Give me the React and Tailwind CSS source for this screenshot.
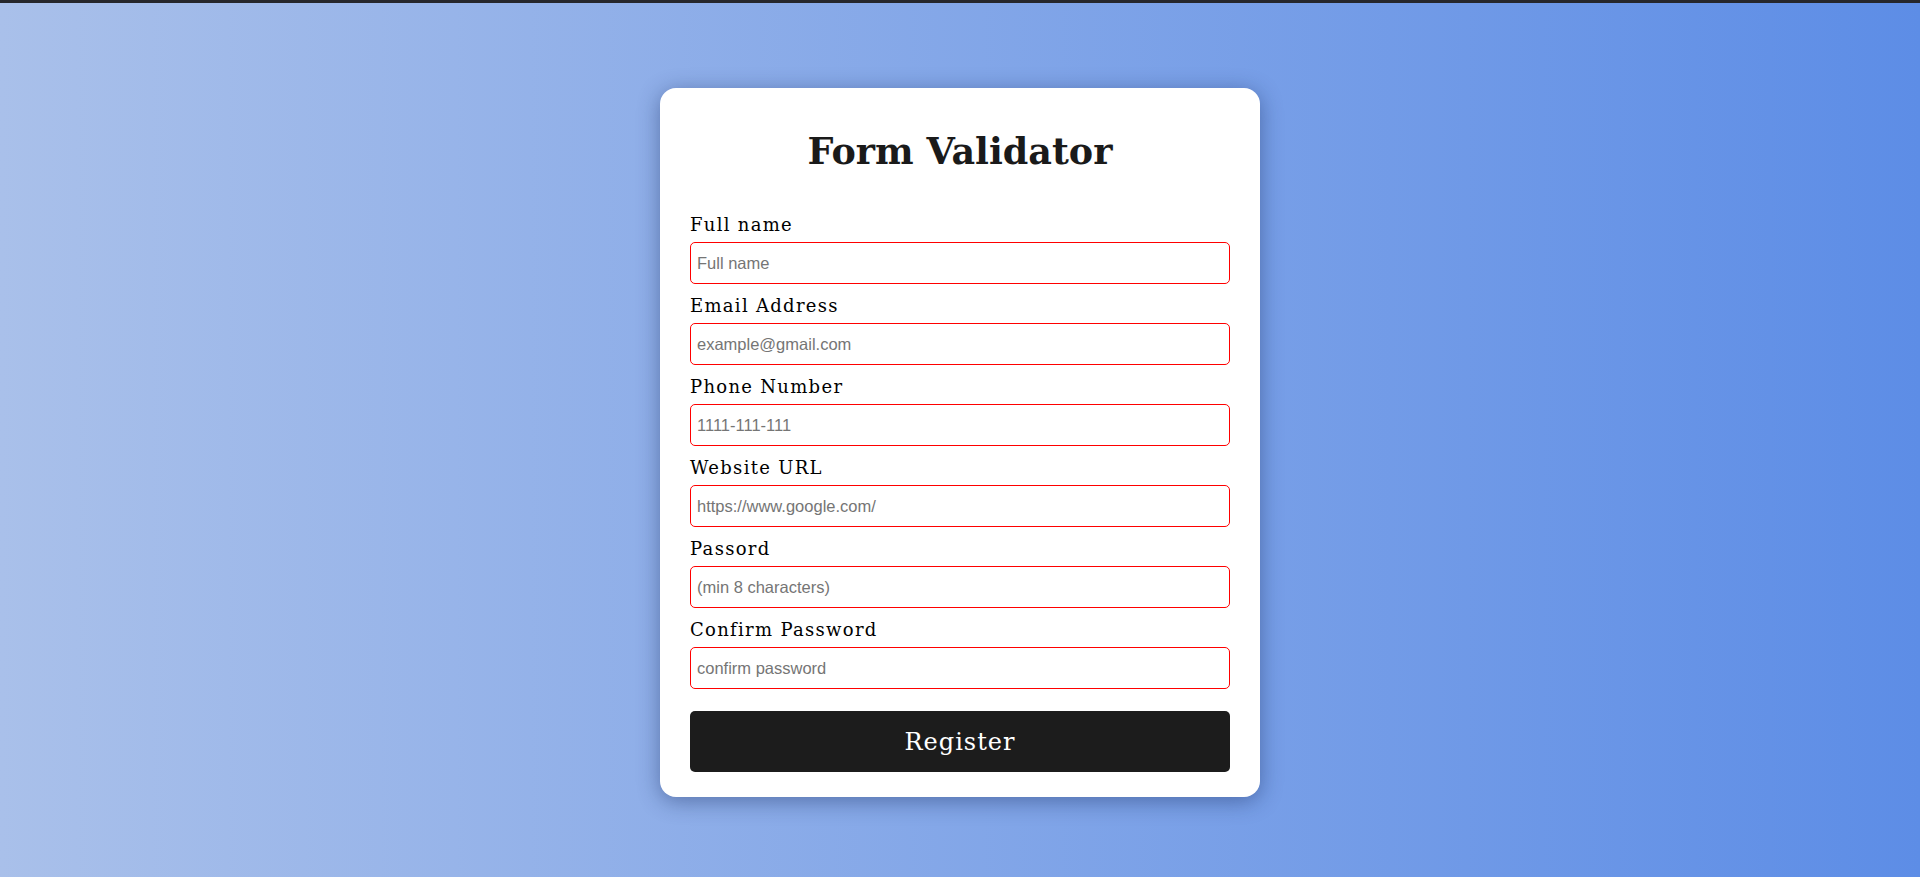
import React from "react";

const fields = [
  { label: "Full name", placeholder: "Full name", type: "text" },
  { label: "Email Address", placeholder: "example@gmail.com", type: "email" },
  { label: "Phone Number", placeholder: "1111-111-111", type: "text" },
  { label: "Website URL", placeholder: "https://www.google.com/", type: "text" },
  { label: "Passord", placeholder: "(min 8 characters)", type: "password" },
  { label: "Confirm Password", placeholder: "confirm password", type: "password" },
];

export default function App() {
  return (
    <div className="w-full h-[877px] overflow-hidden flex flex-col">
      <div className="h-[3px] bg-[#26272c] shrink-0" />
      <div className="flex-1 bg-[linear-gradient(to_right,#a9c0ea,#5d8de6)] flex justify-center pt-[85px]">
        <form
          className="w-[600px] h-[709px] bg-white rounded-[16px] shadow-[0_4px_22px_rgba(20,40,90,0.45)] px-[30px] pt-[40px] pb-[25px] flex flex-col"
          onSubmit={(e) => e.preventDefault()}
        >
          <h1 className="text-center text-[#1a1a1a] font-bold text-[36.5px] leading-[48px] mb-[34px] font-['DejaVu_Serif',serif]">
            Form Validator
          </h1>
          {fields.map((f) => (
            <div key={f.label} className="flex flex-col mb-[7px]">
              <label className="text-[18px] leading-[30px] tracking-[1.3px] text-black font-['DejaVu_Serif',serif]">
                {f.label}
              </label>
              <input
                type={f.type}
                placeholder={f.placeholder}
                className="mt-[2px] h-[42px] w-full border border-[#ff0000] rounded-[5px] px-[6px] text-[16.5px] font-['Liberation_Sans',sans-serif] placeholder:text-[#757575] outline-none"
              />
            </div>
          ))}
          <button
            type="submit"
            className="mt-[15px] h-[62px] w-full bg-[#1c1c1c] rounded-[5px] text-white text-[24px] tracking-[1px] font-['DejaVu_Serif',serif]"
          >
            Register
          </button>
        </form>
      </div>
    </div>
  );
}
